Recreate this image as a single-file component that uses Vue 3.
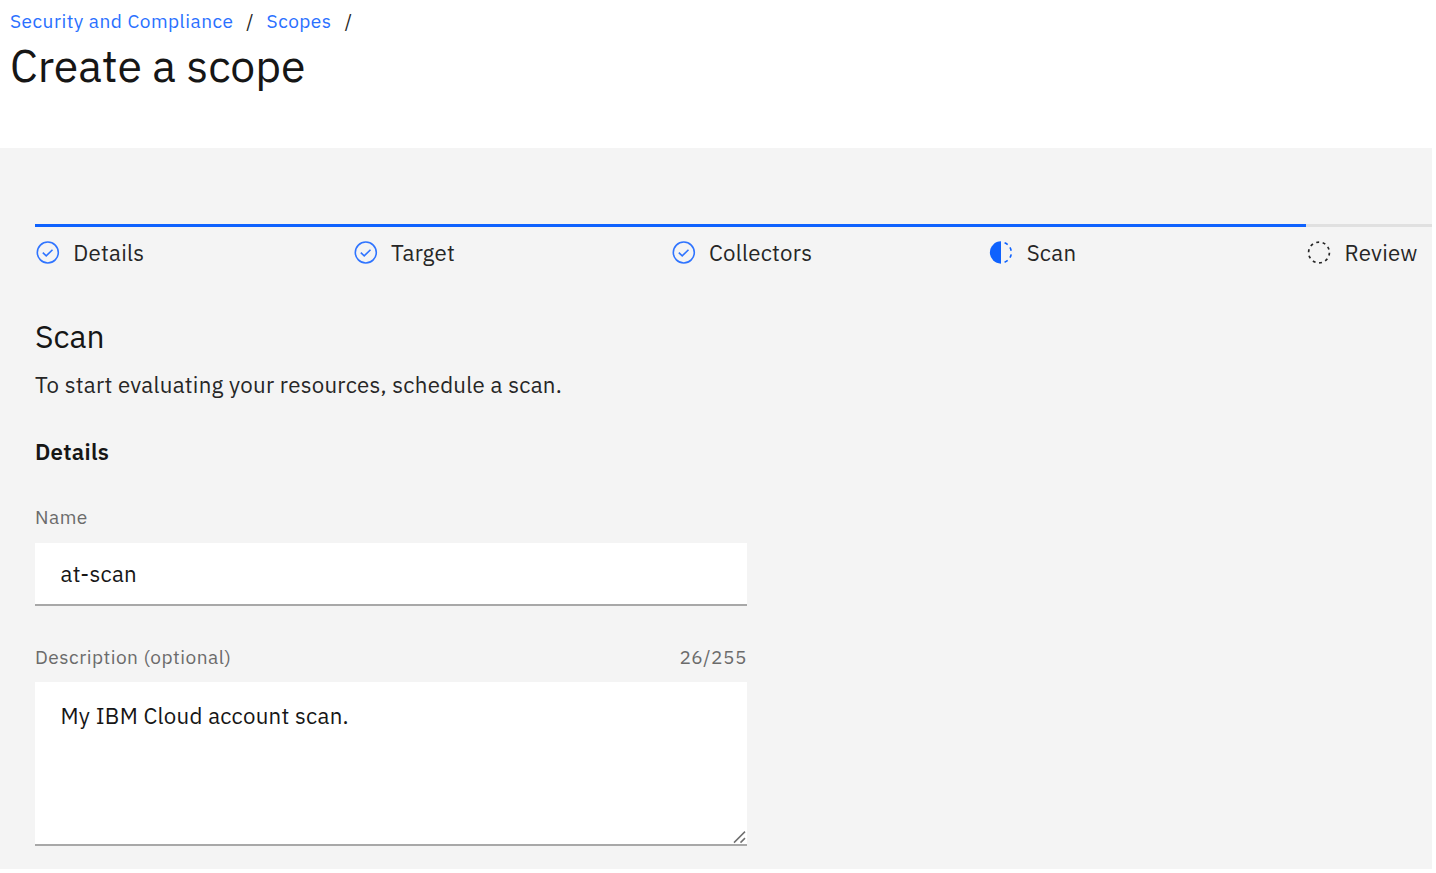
<script setup>
import { ref } from 'vue'

const crumbs = ['Security and Compliance', 'Scopes']
const steps = [
  { key: 'details', label: 'Details', state: 'complete' },
  { key: 'target', label: 'Target', state: 'complete' },
  { key: 'collectors', label: 'Collectors', state: 'complete' },
  { key: 'scan', label: 'Scan', state: 'current' },
  { key: 'review', label: 'Review', state: 'incomplete' },
]
const name = ref('at-scan')
const description = ref('My IBM Cloud account scan.')
</script>

<template>
  <div class="page">
    <header class="header">
      <nav class="breadcrumb">
        <template v-for="(crumb, i) in crumbs" :key="crumb">
          <a :class="['crumb', 'crumb-' + i]">{{ crumb }}</a>
          <span class="slash">/</span>
        </template>
      </nav>
      <h1 class="title">Create a scope</h1>
    </header>

    <main class="content">
      <ol class="steps">
        <li v-for="step in steps" :key="step.key" :class="['step', step.state]">
          <svg class="step-icon" viewBox="0 0.5 24 24" width="24" height="24">
            <template v-if="step.state === 'complete'">
              <circle cx="11.8" cy="12" r="10.5" fill="none" stroke="#2f74ff" stroke-width="1.6" />
              <path d="M6.8 12.1l3.4 3.3 6.3-6.2" fill="none" stroke="#2f74ff" stroke-width="1.6" />
            </template>
            <g v-else-if="step.state === 'current'" transform="translate(-.72 -.72) scale(.795)" fill="#0f62fe">
              <path d="M23.7642 6.8593l1.2851-1.5315A13.976 13.976 0 0 0 20.8672 2.887l-.6836 1.8776A11.9729 11.9729 0 0 1 23.7642 6.8593Z" />
              <path d="M27.81 14l1.9677-.4128A13.8888 13.8888 0 0 0 28.14 9.0457L26.4087 10A12.52 12.52 0 0 1 27.81 14Z" />
              <path d="M20.1836 27.2354l.6836 1.8776a13.976 13.976 0 0 0 4.1821-2.4408l-1.2851-1.5315A11.9729 11.9729 0 0 1 20.1836 27.2354Z" />
              <path d="M26.4087 22L28.14 23a14.14 14.14 0 0 0 1.6382-4.5872L27.81 18.0659A12.1519 12.1519 0 0 1 26.4087 22Z" />
              <path d="M16 30V2a14 14 0 0 0 0 28Z" />
            </g>
            <circle v-else cx="12" cy="12" r="10.4" fill="none" stroke="#262626" stroke-width="1.7" stroke-dasharray="2.95 3.585" stroke-dashoffset="-0.15" />
          </svg>
          <span class="step-label">{{ step.label }}</span>
        </li>
      </ol>

      <h2 class="heading">Scan</h2>
      <p class="intro">To start evaluating your resources, schedule a scan.</p>
      <h3 class="subheading">Details</h3>

      <form class="form">
        <div class="label-row">
          <label for="scan-name">Name</label>
        </div>
        <input id="scan-name" v-model="name" class="field input" type="text" />
        <div class="label-row second">
          <label for="scan-desc">Description (optional)</label>
          <span class="counter">{{ description.length }}/255</span>
        </div>
        <div class="area-wrap">
          <textarea id="scan-desc" v-model="description" class="field area"></textarea>
          <svg class="grip" viewBox="0 0 14 14" width="14" height="14">
            <path d="M1 12.6L12 1.6M7.5 12.6L12 8.1" fill="none" stroke="#6f6f6f" stroke-width="1.5" />
          </svg>
        </div>
      </form>
    </main>
  </div>
</template>

<style>
body {
  background: #fff;
  overflow: hidden;
}
</style>

<style scoped>
.page {
  width: 1432px;
  height: 869px;
  display: flex;
  flex-direction: column;
  overflow: hidden;
  font-family: "IBM Plex Sans", Roboto, "Liberation Sans", sans-serif;
  color: #161616;
}
.header {
  height: 148px;
  flex: none;
  padding: 8px 0 0 10px;
  box-sizing: border-box;
}
.breadcrumb {
  display: flex;
  height: 26px;
  line-height: 26px;
  font-size: 19.1px;
  white-space: nowrap;
}
.crumb {
  color: #2a70ff;
  letter-spacing: 0.48px;
}
.crumb-0 {
  width: 223px;
}
.crumb-1 {
  width: 65px;
}
.slash {
  width: 33.6px;
  text-align: center;
  color: #262626;
}
.title {
  margin: 2px 0 0;
  font-size: 44.5px;
  line-height: 58px;
  font-weight: 400;
}
.content {
  flex: 1;
  min-height: 0;
  background: #f4f4f4;
  padding: 76px 0 0 35px;
}
.steps {
  display: flex;
  list-style: none;
  margin: 0;
  padding: 0;
  width: 1590px;
}
.step {
  width: 317.8px;
  flex: none;
  box-sizing: border-box;
  height: 44px;
  border-top: 3px solid #0f62fe;
  display: flex;
  padding: 14px 0 0 1px;
}
.step.incomplete {
  border-top-color: #e0e0e0;
}
.step-icon {
  flex: none;
  margin-right: 13.3px;
}
.step-label {
  font-size: 22.27px;
  line-height: 23px;
  letter-spacing: 0.25px;
  color: #262626;
}
.heading {
  margin: 47px 0 0;
  font-size: 31.8px;
  line-height: 42px;
  font-weight: 400;
}
.intro {
  margin: 13px 0 0;
  font-size: 22.27px;
  line-height: 30px;
  letter-spacing: 0.25px;
  color: #262626;
}
.subheading {
  margin: 37px 0 0;
  font-size: 22.27px;
  line-height: 30px;
  font-weight: 600;
  letter-spacing: 0.25px;
}
.form {
  width: 712px;
  margin-top: 37px;
}
.label-row {
  display: flex;
  justify-content: space-between;
  height: 26px;
  line-height: 26px;
  font-size: 19.1px;
  letter-spacing: 0.5px;
  color: #6b6b6b;
  margin-bottom: 13px;
}
.label-row.second {
  margin: 38px 0 12px;
}
.field {
  display: block;
  width: 100%;
  box-sizing: border-box;
  margin: 0;
  border: 0;
  border-bottom: 2px solid #a8a8a8;
  border-radius: 0;
  outline: 0;
  background: #fff;
  font-family: inherit;
  font-size: 22.27px;
  letter-spacing: 0.25px;
  color: #161616;
}
.input {
  height: 63px;
  padding: 0 25.5px 1px;
}
.area {
  height: 164px;
  padding: 19px 25.5px;
  line-height: 30px;
  resize: none;
}
.area-wrap {
  position: relative;
}
.grip {
  position: absolute;
  right: 0;
  bottom: 2px;
}
</style>
